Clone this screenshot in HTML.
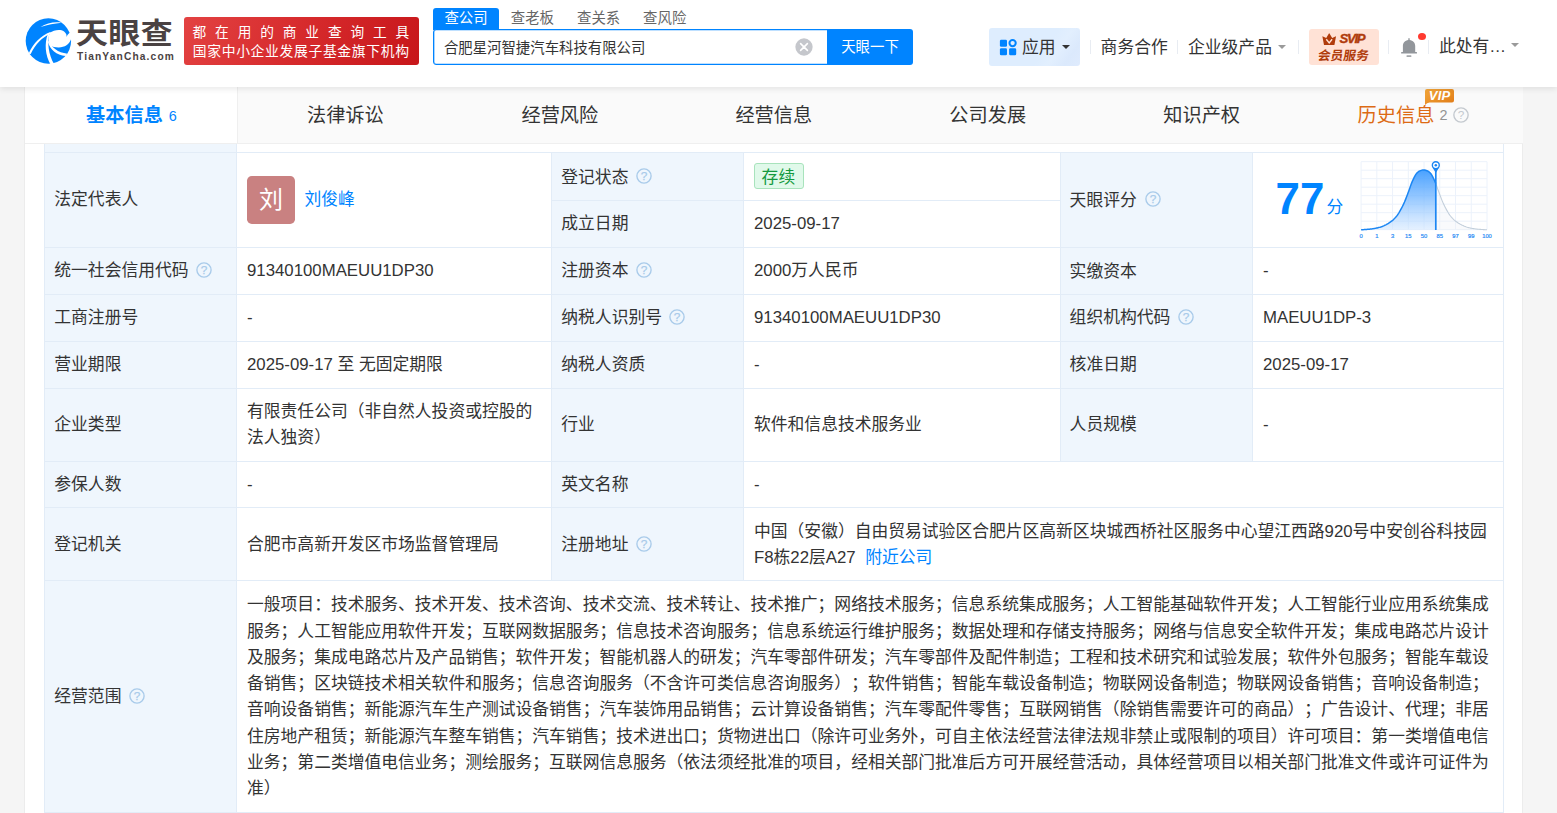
<!DOCTYPE html>
<html lang="zh-CN">
<head>
<meta charset="utf-8">
<title>合肥星河智捷汽车科技有限公司 - 天眼查</title>
<style>
*{box-sizing:border-box;margin:0;padding:0}
html,body{width:1557px;height:813px;overflow:hidden}
body{background:#f5f5f5;font-family:"Liberation Sans","Noto Sans CJK SC",sans-serif;color:#333;font-size:16.8px;position:relative;text-spacing-trim:space-all;-webkit-font-smoothing:antialiased}
.abs,.t,.ln,.q{position:absolute}
.t{white-space:nowrap;line-height:26.4px;height:26.4px;font-size:16.8px;color:#333}
.blue{color:#0084ff}
/* header */
#hd{position:absolute;left:0;top:0;width:1557px;height:87px;background:#fff;box-shadow:0 2px 6px rgba(0,0,0,.09);z-index:5}

.st{top:6px;font-size:14.4px;line-height:24px;color:#666;white-space:nowrap}
.nv{top:35.3px;font-size:16.8px;line-height:26px;color:#333;white-space:nowrap}
.dv{top:40px;width:1px;height:14px;background:#e8ecf2}
.tri{width:0;height:0;border-left:4px solid transparent;border-right:4px solid transparent;border-top:4.2px solid #9a9a9a}
/* container */
#ct{position:absolute;left:24px;top:87px;width:1499px;height:726px;background:#fff;border-left:1px solid #ececec;border-right:1px solid #ececec}
/* tabs */
.tab{position:absolute;top:87px;height:56px;text-align:center;font-size:19.2px;line-height:58px;color:#333;white-space:nowrap}
.tab.on{color:#0084ff;font-weight:bold}
/* table */
.lb{position:absolute;background:#eff6fd}
.ln{background:#e2ecf7}
.q{width:15.4px;height:15.4px;border:1.4px solid #b3d0ea;border-radius:50%;color:#b3d0ea;font-size:11.5px;line-height:12.6px;text-align:center;font-family:"Liberation Sans",sans-serif}
</style>
</head>
<body>
<!--HEADER-->
<div id="hd">
  <!-- logo -->
  <svg class="abs" style="left:20px;top:12px" width="60" height="58" viewBox="0 0 841 813">
    <circle cx="398" cy="406" r="318" fill="#0084ff"/>
    <path fill="#fff" d="M418,292 C470,255 560,232 618,272 C650,298 658,326 650,352 C660,330 672,308 700,286 L740,286 L740,376 L717,380 C694,455 620,500 540,498 C490,497 455,488 435,478 C410,440 398,400 400,380 C403,340 408,312 418,292 Z"/>
    <path fill="#fff" d="M288,212 C370,160 480,132 582,150 C480,160 390,180 288,212 Z"/>
    <path fill="#fff" d="M120,585 C190,430 290,335 425,280 L432,300 C310,355 215,445 150,590 Z"/>
    <path fill="#fff" d="M412,300 C380,440 400,590 478,730 L430,740 C352,600 340,440 392,300 Z"/>
    <path fill="#fff" d="M405,400 C440,500 530,570 665,585 L640,618 C510,600 420,530 392,420 Z"/>
  </svg>
  <div class="abs" id="lg1" style="left:76.3px;top:12.6px;font-size:29px;line-height:42px;font-weight:700;color:#4a4242;letter-spacing:0.4px;white-space:nowrap;transform:scaleX(1.1);transform-origin:0 0">天眼查</div>
  <div class="abs" id="lg2" style="left:77px;top:49.6px;font-size:10.2px;line-height:14px;font-weight:bold;color:#4a4242;letter-spacing:1.15px;white-space:nowrap">TianYanCha.com</div>
  <!-- red banner -->
  <div class="abs" style="left:184px;top:16.6px;width:235px;height:48.2px;border-radius:3px;background:linear-gradient(115deg,#e34242 0%,#d62a2c 50%,#c7161a 100%)"></div>
  <div class="abs" id="bn1" style="left:192.5px;top:22.5px;font-size:13.7px;line-height:20px;color:#fff;letter-spacing:8.88px;white-space:nowrap">都在用的商业查询工具</div>
  <div class="abs" id="bn2" style="left:192.8px;top:41.6px;font-size:13.8px;line-height:20px;color:#fff;letter-spacing:0.66px;white-space:nowrap">国家中小企业发展子基金旗下机构</div>
  <!-- search tabs -->
  <div class="abs" style="left:433px;top:8px;width:66px;height:22px;background:#0084ff;border-radius:3px 3px 0 0"></div>
  <div class="abs st" style="left:444.4px;color:#fff">查公司</div>
  <div class="abs st" style="left:510.8px">查老板</div>
  <div class="abs st" style="left:577px">查关系</div>
  <div class="abs st" style="left:643.1px">查风险</div>
  <!-- input -->
  <div class="abs" style="left:433px;top:29px;width:396px;height:36px;border:1px solid #0084ff;box-shadow:inset 0 0 0 0.35px #0084ff;border-radius:3px 0 0 3px;background:#fff"></div>
  <div class="abs" style="left:443.9px;top:37.6px;font-size:14.4px;line-height:20px;color:#333;white-space:nowrap">合肥星河智捷汽车科技有限公司</div>
  <svg class="abs" style="left:795px;top:37.6px" width="18" height="18" viewBox="0 0 18 18"><circle cx="9" cy="9" r="8.65" fill="#c5c7cc"/><path d="M5.6,5.6 L12.4,12.4 M12.4,5.6 L5.6,12.4" stroke="#fff" stroke-width="1.6" stroke-linecap="round"/></svg>
  <div class="abs" style="left:827px;top:29px;width:86px;height:36px;background:#0084ff;border-radius:0 3px 3px 0;color:#fff;font-size:14.4px;line-height:37px;text-align:center;white-space:nowrap">天眼一下</div>
  <!-- right nav -->
  <div class="abs" style="left:989px;top:27.7px;width:91px;height:38px;border-radius:3px;background:linear-gradient(125deg,#deedfe 0%,#deedfe 60%,#e2effe 72%,#dbe9fc 86%,#dfebfd 100%)"></div>
  <svg class="abs" style="left:999px;top:38px" width="19" height="19" viewBox="0 0 19 19">
    <rect x="0.9" y="1.7" width="7.1" height="7.1" rx="1.3" fill="#0084ff"/>
    <rect x="0.9" y="10.2" width="7.1" height="7.1" rx="1.3" fill="#0084ff"/>
    <rect x="10.1" y="10.2" width="7.1" height="7.1" rx="1.3" fill="#0084ff"/>
    <circle cx="13.6" cy="5.1" r="3.15" fill="none" stroke="#0084ff" stroke-width="2"/>
  </svg>
  <div class="abs nv" style="left:1022px">应用</div>
  <div class="abs tri" style="left:1061.8px;top:45px;border-top-color:#333"></div>
  <div class="abs dv" style="left:1090px"></div>
  <div class="abs nv" style="left:1100.6px">商务合作</div>
  <div class="abs dv" style="left:1177px"></div>
  <div class="abs nv" style="left:1188px">企业级产品</div>
  <div class="abs tri" style="left:1277.6px;top:45px"></div>
  <div class="abs dv" style="left:1298px"></div>
  <!-- svip -->
  <div class="abs" style="left:1309px;top:29px;width:69.7px;height:36px;border-radius:3px;background:#ffe2d6"></div>
  <svg class="abs" style="left:1322.4px;top:32.6px" width="14.4" height="12.6" viewBox="0 0 14.4 12.6"><path fill="#b03c0c" d="M0.4,3.5 Q0.5,3.1 1,3.4 L4.2,5 L6.9,0.5 Q7.2,0.1 7.5,0.5 L10.2,5 L13.4,3.4 Q13.9,3.1 14,3.5 L12.5,11.4 Q12.4,12.1 11.7,12.1 L2.7,12.1 Q2,12.1 1.9,11.4 Z"/><path d="M4.3,6.3 L7.2,9.9 L10.1,6.3" fill="none" stroke="#ffe2d6" stroke-width="1.4"/></svg>
  <div class="abs" style="left:1339.6px;top:31.1px;font-size:13.2px;line-height:16px;font-weight:bold;font-style:italic;color:#b03c0c;letter-spacing:-1.35px;-webkit-text-stroke:0.4px #b03c0c;white-space:nowrap">SVIP</div>
  <div class="abs" style="left:1317.8px;top:46.9px;font-size:12.7px;line-height:18px;font-weight:bold;color:#b03c0c;white-space:nowrap;transform:skewX(-9deg)">会员服务</div>
  <div class="abs dv" style="left:1388px"></div>
  <!-- bell -->
  <svg class="abs" style="left:1400px;top:37px" width="18" height="21" viewBox="0 0 18 21"><path fill="#92969b" d="M8.3,1.2 L9.7,1.2 L9.7,2.9 C13,3.2 15.2,5.8 15.2,9 L15.2,15 L16.6,15 Q17,15 17,15.4 L17,16.2 Q17,16.6 16.6,16.6 L1.5,16.6 Q1.1,16.6 1.1,16.2 L1.1,15.4 Q1.1,15 1.5,15 L2.9,15 L2.9,9 C2.9,5.8 5,3.2 8.3,2.9 Z"/><rect x="6.5" y="18.3" width="4.9" height="1.6" rx="0.4" fill="#a4a7ab"/></svg>
  <div class="abs" style="left:1418px;top:32.9px;width:8.1px;height:7.2px;border-radius:50%;background:#ff3a30"></div>
  <div class="abs dv" style="left:1428px"></div>
  <div class="abs nv" style="left:1439px;top:33.7px">此处有…</div>
  <div class="abs tri" style="left:1511.2px;top:43.2px"></div>
</div>
<!--/HEADER-->
<!--TABS-->
<div id="ct"></div>
<div class="abs" style="left:237px;top:87px;width:1286px;height:57px;background:#fafafa;border-left:1px solid #efefef;border-bottom:1px solid #f0f0f0"></div>
<div class="abs" style="left:25px;top:143px;width:1498px;height:1px;background:#efefef"></div>
<div class="tab on" style="left:25px;width:213px">基本信息<span style="font-size:14.4px;font-weight:normal;margin-left:6px;position:relative;top:-1px">6</span></div>
<div class="tab" style="left:238px;width:214.9px">法律诉讼</div>
<div class="tab" style="left:452.9px;width:213.9px">经营风险</div>
<div class="tab" style="left:666.8px;width:214px">经营信息</div>
<div class="tab" style="left:880.8px;width:213.9px">公司发展</div>
<div class="tab" style="left:1094.7px;width:214px">知识产权</div>
<div class="tab" style="left:1308.7px;width:214.3px"></div>
<div class="abs" style="left:1357.6px;top:88px;font-size:19.2px;line-height:56px;color:#dd6a14;white-space:nowrap">历史信息</div>
<div class="abs" style="left:1439.6px;top:87px;font-size:14.4px;line-height:56px;color:#939393;white-space:nowrap">2</div>
<svg class="abs" style="left:1451.9px;top:105.6px" width="18" height="18" viewBox="0 0 18 18"><circle cx="9" cy="9" r="7.15" fill="none" stroke="#c4c9cf" stroke-width="1.35"/><text x="9" y="13.2" text-anchor="middle" font-family="Liberation Sans, sans-serif" font-size="11.8" fill="#c4c9cf">?</text></svg>
<!-- VIP badge -->
<svg class="abs" style="left:1424px;top:88px" width="32" height="18" viewBox="0 0 32 18">
  <defs><linearGradient id="vg" x1="0" y1="0" x2="1" y2="1"><stop offset="0" stop-color="#f3a73a"/><stop offset="1" stop-color="#e07a16"/></linearGradient></defs>
  <path fill="url(#vg)" d="M3,1 L28,1 Q30,1 30,3 L30,12.4 Q30,14.4 28,14.4 L5.5,14.4 Q3,14.8 1,17 L1,3 Q1,1 3,1 Z"/>
  <text x="15.6" y="12.4" text-anchor="middle" font-family="Liberation Sans, sans-serif" font-size="13" font-weight="bold" font-style="italic" letter-spacing="0.2" fill="#fff">VIP</text>
</svg>
<!--/TABS-->
<!--TABLE-->
<div class="lb" style="left:45px;top:144px;width:191px;height:669px"></div>
<div class="lb" style="left:552px;top:153px;width:191px;height:427px"></div>
<div class="lb" style="left:1061px;top:153px;width:191px;height:308px"></div>
<div class="ln" style="left:44px;top:152px;width:1460px;height:1px"></div>
<div class="ln" style="left:44px;top:247px;width:1460px;height:1px"></div>
<div class="ln" style="left:44px;top:294px;width:1460px;height:1px"></div>
<div class="ln" style="left:44px;top:341px;width:1460px;height:1px"></div>
<div class="ln" style="left:44px;top:388px;width:1460px;height:1px"></div>
<div class="ln" style="left:44px;top:461px;width:1460px;height:1px"></div>
<div class="ln" style="left:44px;top:507px;width:1460px;height:1px"></div>
<div class="ln" style="left:44px;top:580px;width:1460px;height:1px"></div>
<div class="ln" style="left:44px;top:812px;width:1460px;height:1px"></div>
<div class="ln" style="left:551px;top:200px;width:509px;height:1px"></div>
<div class="ln" style="left:44px;top:144px;width:1px;height:669px"></div>
<div class="ln" style="left:236px;top:144px;width:1px;height:669px"></div>
<div class="ln" style="left:1503px;top:144px;width:1px;height:669px"></div>
<div class="ln" style="left:551px;top:152px;width:1px;height:428px"></div>
<div class="ln" style="left:743px;top:152px;width:1px;height:428px"></div>
<div class="ln" style="left:1060px;top:152px;width:1px;height:309px"></div>
<div class="ln" style="left:1252px;top:152px;width:1px;height:309px"></div>
<div class="t" style="left:54.3px;top:187px;">法定代表人</div>
<div class="abs" style="left:246.8px;top:175.8px;width:48.4px;height:48.4px;border-radius:4.8px;background:#c98181;color:#fff;font-size:24px;line-height:47px;text-align:center">刘</div>
<div class="t blue" style="left:304.4px;top:187px;">刘俊峰</div>
<div class="t" style="left:561.3px;top:165px;">登记状态</div>
<svg class="abs" style="left:634.7px;top:166.7px" width="18" height="18" viewBox="0 0 18 18"><circle cx="9" cy="9" r="7.1" fill="none" stroke="#a9cbea" stroke-width="1.35"/><text x="9" y="13.2" text-anchor="middle" font-family="Liberation Sans, sans-serif" font-size="11.8" fill="#a9cbea" stroke="#a9cbea" stroke-width="0.25">?</text></svg>
<div class="abs" style="left:754px;top:163.2px;width:50px;height:25.8px;border:1px solid #a8e3bc;border-radius:3px;background:#e0f9ea"></div>
<div class="t" style="left:761.6px;top:165px;color:#14993f">存续</div>
<div class="t" style="left:561.3px;top:211px;">成立日期</div>
<div class="t" style="left:754px;top:211px;">2025-09-17</div>
<div class="t" style="left:1069.6px;top:188px;">天眼评分</div>
<svg class="abs" style="left:1143.5px;top:190.2px" width="18" height="18" viewBox="0 0 18 18"><circle cx="9" cy="9" r="7.1" fill="none" stroke="#a9cbea" stroke-width="1.35"/><text x="9" y="13.2" text-anchor="middle" font-family="Liberation Sans, sans-serif" font-size="11.8" fill="#a9cbea" stroke="#a9cbea" stroke-width="0.25">?</text></svg>
<div class="abs" style="left:1275.6px;top:171.3px;font-size:43.8px;line-height:56px;font-weight:bold;color:#0084ff;white-space:nowrap;letter-spacing:0px">77</div>
<div class="t blue" style="left:1326.6px;top:195px;">分</div>
<svg class="abs" style="left:1350px;top:155px" width="150" height="90" viewBox="0 0 150 90">
<defs><linearGradient id="cg" x1="0" y1="0" x2="0" y2="1"><stop offset="0" stop-color="#3f9cff" stop-opacity="0.95"/><stop offset="0.45" stop-color="#6fb4ff" stop-opacity="0.75"/><stop offset="1" stop-color="#cfe5ff" stop-opacity="0.55"/></linearGradient></defs>
<path d="M11.10,6.70V74.70M26.84,6.70V74.70M42.57,6.70V74.70M58.31,6.70V74.70M74.05,6.70V74.70M89.79,6.70V74.70M105.53,6.70V74.70M121.26,6.70V74.70M137.00,6.70V74.70M11.10,6.70H137.00M11.10,15.20H137.00M11.10,23.70H137.00M11.10,32.20H137.00M11.10,40.70H137.00M11.10,49.20H137.00M11.10,57.70H137.00M11.10,66.20H137.00M11.10,74.70H137.00" fill="none" stroke="#ecf2fb" stroke-width="1"/>
<polygon points="85.80,28.63 86.50,30.54 87.20,32.53 87.90,34.52 88.60,36.43 89.30,38.29 90.00,40.17 90.70,42.03 91.40,43.86 92.10,45.61 92.80,47.27 93.50,48.81 94.20,50.29 94.90,51.71 95.60,53.07 96.30,54.37 97.00,55.62 97.70,56.83 98.40,58.00 99.10,59.11 99.80,60.12 100.50,61.02 101.20,61.87 101.90,62.67 102.60,63.42 103.30,64.13 104.00,64.79 104.70,65.40 105.40,65.97 106.10,66.51 106.80,67.02 107.50,67.51 108.20,67.98 108.90,68.42 109.60,68.84 110.30,69.24 111.00,69.61 111.70,69.96 112.40,70.30 113.10,70.62 113.80,70.93 114.50,71.23 115.20,71.50 115.90,71.76 116.60,72.00 117.30,72.22 118.00,72.42 118.70,72.61 119.40,72.78 120.10,72.95 120.80,73.11 121.50,73.25 122.20,73.39 122.90,73.51 123.60,73.62 124.30,73.73 125.00,73.83 125.70,73.93 126.40,74.02 127.10,74.10 127.80,74.18 128.50,74.25 129.20,74.31 129.90,74.36 130.60,74.42 131.30,74.47 132.00,74.52 132.70,74.57 133.40,74.61 134.10,74.65 134.80,74.68 135.50,74.69 136.20,74.70 136.90,74.70 137.00,74.70 137.00,74.70 85.80,74.70" fill="#eef1f5" fill-opacity="0.35"/>
<polyline points="85.80,28.63 86.50,30.54 87.20,32.53 87.90,34.52 88.60,36.43 89.30,38.29 90.00,40.17 90.70,42.03 91.40,43.86 92.10,45.61 92.80,47.27 93.50,48.81 94.20,50.29 94.90,51.71 95.60,53.07 96.30,54.37 97.00,55.62 97.70,56.83 98.40,58.00 99.10,59.11 99.80,60.12 100.50,61.02 101.20,61.87 101.90,62.67 102.60,63.42 103.30,64.13 104.00,64.79 104.70,65.40 105.40,65.97 106.10,66.51 106.80,67.02 107.50,67.51 108.20,67.98 108.90,68.42 109.60,68.84 110.30,69.24 111.00,69.61 111.70,69.96 112.40,70.30 113.10,70.62 113.80,70.93 114.50,71.23 115.20,71.50 115.90,71.76 116.60,72.00 117.30,72.22 118.00,72.42 118.70,72.61 119.40,72.78 120.10,72.95 120.80,73.11 121.50,73.25 122.20,73.39 122.90,73.51 123.60,73.62 124.30,73.73 125.00,73.83 125.70,73.93 126.40,74.02 127.10,74.10 127.80,74.18 128.50,74.25 129.20,74.31 129.90,74.36 130.60,74.42 131.30,74.47 132.00,74.52 132.70,74.57 133.40,74.61 134.10,74.65 134.80,74.68 135.50,74.69 136.20,74.70 136.90,74.70 137.00,74.70" fill="none" stroke="#c3cfdb" stroke-width="1.1"/>
<polygon points="11.10,74.70 11.80,74.69 12.50,74.67 13.20,74.64 13.90,74.61 14.60,74.56 15.30,74.51 16.00,74.46 16.70,74.41 17.40,74.36 18.10,74.30 18.80,74.24 19.50,74.17 20.20,74.09 20.90,74.00 21.60,73.91 22.30,73.82 23.00,73.71 23.70,73.61 24.40,73.49 25.10,73.37 25.80,73.23 26.50,73.08 27.20,72.93 27.90,72.76 28.60,72.58 29.30,72.39 30.00,72.19 30.70,71.97 31.40,71.73 32.10,71.47 32.80,71.19 33.50,70.89 34.20,70.58 34.90,70.25 35.60,69.92 36.30,69.56 37.00,69.18 37.70,68.78 38.40,68.36 39.10,67.91 39.80,67.44 40.50,66.95 41.20,66.43 41.90,65.89 42.60,65.32 43.30,64.70 44.00,64.03 44.70,63.32 45.40,62.56 46.10,61.75 46.80,60.90 47.50,59.98 48.20,58.95 48.90,57.84 49.60,56.66 50.30,55.44 51.00,54.19 51.70,52.88 52.40,51.51 53.10,50.09 53.80,48.60 54.50,47.04 55.20,45.37 55.90,43.60 56.60,41.77 57.30,39.90 58.00,38.02 58.70,36.16 59.40,34.24 60.10,32.25 60.80,30.26 61.50,28.36 62.20,26.63 62.90,25.10 63.60,23.60 64.30,22.16 65.00,20.82 65.70,19.63 66.40,18.63 67.10,17.86 67.80,17.23 68.50,16.68 69.20,16.23 69.90,15.88 70.60,15.61 71.30,15.36 72.00,15.14 72.70,14.98 73.40,14.90 74.10,14.93 74.80,15.04 75.50,15.23 76.20,15.46 76.90,15.72 77.60,16.01 78.30,16.41 79.00,16.91 79.70,17.49 80.40,18.16 81.10,19.03 81.80,20.12 82.50,21.38 83.20,22.77 83.90,24.24 84.60,25.75 85.30,27.35 85.80,28.63 85.80,74.70 11.10,74.70" fill="url(#cg)"/>
<polyline points="11.10,74.70 11.80,74.69 12.50,74.67 13.20,74.64 13.90,74.61 14.60,74.56 15.30,74.51 16.00,74.46 16.70,74.41 17.40,74.36 18.10,74.30 18.80,74.24 19.50,74.17 20.20,74.09 20.90,74.00 21.60,73.91 22.30,73.82 23.00,73.71 23.70,73.61 24.40,73.49 25.10,73.37 25.80,73.23 26.50,73.08 27.20,72.93 27.90,72.76 28.60,72.58 29.30,72.39 30.00,72.19 30.70,71.97 31.40,71.73 32.10,71.47 32.80,71.19 33.50,70.89 34.20,70.58 34.90,70.25 35.60,69.92 36.30,69.56 37.00,69.18 37.70,68.78 38.40,68.36 39.10,67.91 39.80,67.44 40.50,66.95 41.20,66.43 41.90,65.89 42.60,65.32 43.30,64.70 44.00,64.03 44.70,63.32 45.40,62.56 46.10,61.75 46.80,60.90 47.50,59.98 48.20,58.95 48.90,57.84 49.60,56.66 50.30,55.44 51.00,54.19 51.70,52.88 52.40,51.51 53.10,50.09 53.80,48.60 54.50,47.04 55.20,45.37 55.90,43.60 56.60,41.77 57.30,39.90 58.00,38.02 58.70,36.16 59.40,34.24 60.10,32.25 60.80,30.26 61.50,28.36 62.20,26.63 62.90,25.10 63.60,23.60 64.30,22.16 65.00,20.82 65.70,19.63 66.40,18.63 67.10,17.86 67.80,17.23 68.50,16.68 69.20,16.23 69.90,15.88 70.60,15.61 71.30,15.36 72.00,15.14 72.70,14.98 73.40,14.90 74.10,14.93 74.80,15.04 75.50,15.23 76.20,15.46 76.90,15.72 77.60,16.01 78.30,16.41 79.00,16.91 79.70,17.49 80.40,18.16 81.10,19.03 81.80,20.12 82.50,21.38 83.20,22.77 83.90,24.24 84.60,25.75 85.30,27.35 85.80,28.63" fill="none" stroke="#1b86f3" stroke-width="1.5" stroke-linejoin="round"/>
<path d="M85.80,13.00V75.00" stroke="#1b86f3" stroke-width="1.7" fill="none"/>
<path d="M82.60,12.40 L85.80,18.00 L89.00,12.40 Z" fill="#1b86f3"/>
<circle cx="85.80" cy="10.20" r="3.45" fill="#fff" stroke="#1b86f3" stroke-width="1.4"/>
<circle cx="85.80" cy="10.20" r="1.25" fill="#1b86f3"/>
<text x="11.10" y="83.30" text-anchor="middle" font-family="Liberation Sans, sans-serif" font-size="5.8" fill="#2f8ff5" stroke="#2f8ff5" stroke-width="0.22">0</text>
<text x="26.84" y="83.30" text-anchor="middle" font-family="Liberation Sans, sans-serif" font-size="5.8" fill="#2f8ff5" stroke="#2f8ff5" stroke-width="0.22">1</text>
<text x="42.57" y="83.30" text-anchor="middle" font-family="Liberation Sans, sans-serif" font-size="5.8" fill="#2f8ff5" stroke="#2f8ff5" stroke-width="0.22">3</text>
<text x="58.31" y="83.30" text-anchor="middle" font-family="Liberation Sans, sans-serif" font-size="5.8" fill="#2f8ff5" stroke="#2f8ff5" stroke-width="0.22">15</text>
<text x="74.05" y="83.30" text-anchor="middle" font-family="Liberation Sans, sans-serif" font-size="5.8" fill="#2f8ff5" stroke="#2f8ff5" stroke-width="0.22">50</text>
<text x="89.79" y="83.30" text-anchor="middle" font-family="Liberation Sans, sans-serif" font-size="5.8" fill="#2f8ff5" stroke="#2f8ff5" stroke-width="0.22">85</text>
<text x="105.53" y="83.30" text-anchor="middle" font-family="Liberation Sans, sans-serif" font-size="5.8" fill="#2f8ff5" stroke="#2f8ff5" stroke-width="0.22">97</text>
<text x="121.26" y="83.30" text-anchor="middle" font-family="Liberation Sans, sans-serif" font-size="5.8" fill="#2f8ff5" stroke="#2f8ff5" stroke-width="0.22">99</text>
<text x="137.00" y="83.30" text-anchor="middle" font-family="Liberation Sans, sans-serif" font-size="5.8" fill="#2f8ff5" stroke="#2f8ff5" stroke-width="0.22">100</text>
</svg>
<div class="t" style="left:54.3px;top:258px;">统一社会信用代码</div>
<svg class="abs" style="left:195.2px;top:260.8px" width="18" height="18" viewBox="0 0 18 18"><circle cx="9" cy="9" r="7.1" fill="none" stroke="#a9cbea" stroke-width="1.35"/><text x="9" y="13.2" text-anchor="middle" font-family="Liberation Sans, sans-serif" font-size="11.8" fill="#a9cbea" stroke="#a9cbea" stroke-width="0.25">?</text></svg>
<div class="t" style="left:247px;top:258px;">91340100MAEUU1DP30</div>
<div class="t" style="left:561.3px;top:258px;">注册资本</div>
<svg class="abs" style="left:634.7px;top:260.8px" width="18" height="18" viewBox="0 0 18 18"><circle cx="9" cy="9" r="7.1" fill="none" stroke="#a9cbea" stroke-width="1.35"/><text x="9" y="13.2" text-anchor="middle" font-family="Liberation Sans, sans-serif" font-size="11.8" fill="#a9cbea" stroke="#a9cbea" stroke-width="0.25">?</text></svg>
<div class="t" style="left:754px;top:258px;">2000万人民币</div>
<div class="t" style="left:1069.6px;top:259px;">实缴资本</div>
<div class="t" style="left:1263px;top:258px;">-</div>
<div class="t" style="left:54.3px;top:305px;">工商注册号</div>
<div class="t" style="left:247px;top:305px;">-</div>
<div class="t" style="left:561.3px;top:305px;">纳税人识别号</div>
<svg class="abs" style="left:667.9px;top:307.7px" width="18" height="18" viewBox="0 0 18 18"><circle cx="9" cy="9" r="7.1" fill="none" stroke="#a9cbea" stroke-width="1.35"/><text x="9" y="13.2" text-anchor="middle" font-family="Liberation Sans, sans-serif" font-size="11.8" fill="#a9cbea" stroke="#a9cbea" stroke-width="0.25">?</text></svg>
<div class="t" style="left:754px;top:305px;">91340100MAEUU1DP30</div>
<div class="t" style="left:1069.6px;top:305px;">组织机构代码</div>
<svg class="abs" style="left:1177.2px;top:307.7px" width="18" height="18" viewBox="0 0 18 18"><circle cx="9" cy="9" r="7.1" fill="none" stroke="#a9cbea" stroke-width="1.35"/><text x="9" y="13.2" text-anchor="middle" font-family="Liberation Sans, sans-serif" font-size="11.8" fill="#a9cbea" stroke="#a9cbea" stroke-width="0.25">?</text></svg>
<div class="t" style="left:1263px;top:305px;">MAEUU1DP-3</div>
<div class="t" style="left:54.3px;top:352px;">营业期限</div>
<div class="t" style="left:247px;top:352px;">2025-09-17 至 无固定期限</div>
<div class="t" style="left:561.3px;top:352px;">纳税人资质</div>
<div class="t" style="left:754px;top:352px;">-</div>
<div class="t" style="left:1069.6px;top:352px;">核准日期</div>
<div class="t" style="left:1263px;top:352px;">2025-09-17</div>
<div class="t" style="left:54.3px;top:412px;">企业类型</div>
<div class="t" style="left:247px;top:399px;">有限责任公司（非自然人投资或控股的</div>
<div class="t" style="left:247px;top:425px;">法人独资）</div>
<div class="t" style="left:561.3px;top:412px;">行业</div>
<div class="t" style="left:754px;top:412px;">软件和信息技术服务业</div>
<div class="t" style="left:1069.6px;top:412px;">人员规模</div>
<div class="t" style="left:1263px;top:412px;">-</div>
<div class="t" style="left:54.3px;top:472px;">参保人数</div>
<div class="t" style="left:247px;top:472px;">-</div>
<div class="t" style="left:561.3px;top:472px;">英文名称</div>
<div class="t" style="left:754px;top:472px;">-</div>
<div class="t" style="left:54.3px;top:532px;">登记机关</div>
<div class="t" style="left:247px;top:532px;">合肥市高新开发区市场监督管理局</div>
<div class="t" style="left:561.3px;top:532px;">注册地址</div>
<svg class="abs" style="left:634.7px;top:534.6px" width="18" height="18" viewBox="0 0 18 18"><circle cx="9" cy="9" r="7.1" fill="none" stroke="#a9cbea" stroke-width="1.35"/><text x="9" y="13.2" text-anchor="middle" font-family="Liberation Sans, sans-serif" font-size="11.8" fill="#a9cbea" stroke="#a9cbea" stroke-width="0.25">?</text></svg>
<div class="t" style="left:754px;top:519px;">中国（安徽）自由贸易试验区合肥片区高新区块城西桥社区服务中心望江西路920号中安创谷科技园</div>
<div class="t" style="left:754px;top:545px;">F8栋22层A27<span class="blue" style="margin-left:9.6px">附近公司</span></div>
<div class="t" style="left:54.3px;top:684px;">经营范围</div>
<svg class="abs" style="left:128px;top:686.8px" width="18" height="18" viewBox="0 0 18 18"><circle cx="9" cy="9" r="7.1" fill="none" stroke="#a9cbea" stroke-width="1.35"/><text x="9" y="13.2" text-anchor="middle" font-family="Liberation Sans, sans-serif" font-size="11.8" fill="#a9cbea" stroke="#a9cbea" stroke-width="0.25">?</text></svg>
<div class="t" style="left:247px;top:592px;">一般项目：技术服务、技术开发、技术咨询、技术交流、技术转让、技术推广；网络技术服务；信息系统集成服务；人工智能基础软件开发；人工智能行业应用系统集成</div>
<div class="t" style="left:247px;top:619px;">服务；人工智能应用软件开发；互联网数据服务；信息技术咨询服务；信息系统运行维护服务；数据处理和存储支持服务；网络与信息安全软件开发；集成电路芯片设计</div>
<div class="t" style="left:247px;top:645px;">及服务；集成电路芯片及产品销售；软件开发；智能机器人的研发；汽车零部件研发；汽车零部件及配件制造；工程和技术研究和试验发展；软件外包服务；智能车载设</div>
<div class="t" style="left:247px;top:671px;">备销售；区块链技术相关软件和服务；信息咨询服务（不含许可类信息咨询服务）；软件销售；智能车载设备制造；物联网设备制造；物联网设备销售；音响设备制造；</div>
<div class="t" style="left:247px;top:697px;">音响设备销售；新能源汽车生产测试设备销售；汽车装饰用品销售；云计算设备销售；汽车零配件零售；互联网销售（除销售需要许可的商品）；广告设计、代理；非居</div>
<div class="t" style="left:247px;top:724px;">住房地产租赁；新能源汽车整车销售；汽车销售；技术进出口；货物进出口（除许可业务外，可自主依法经营法律法规非禁止或限制的项目）许可项目：第一类增值电信</div>
<div class="t" style="left:247px;top:750px;">业务；第二类增值电信业务；测绘服务；互联网信息服务（依法须经批准的项目，经相关部门批准后方可开展经营活动，具体经营项目以相关部门批准文件或许可证件为</div>
<div class="t" style="left:247px;top:776px;">准）</div>
<!--/TABLE-->
</body>
</html>
